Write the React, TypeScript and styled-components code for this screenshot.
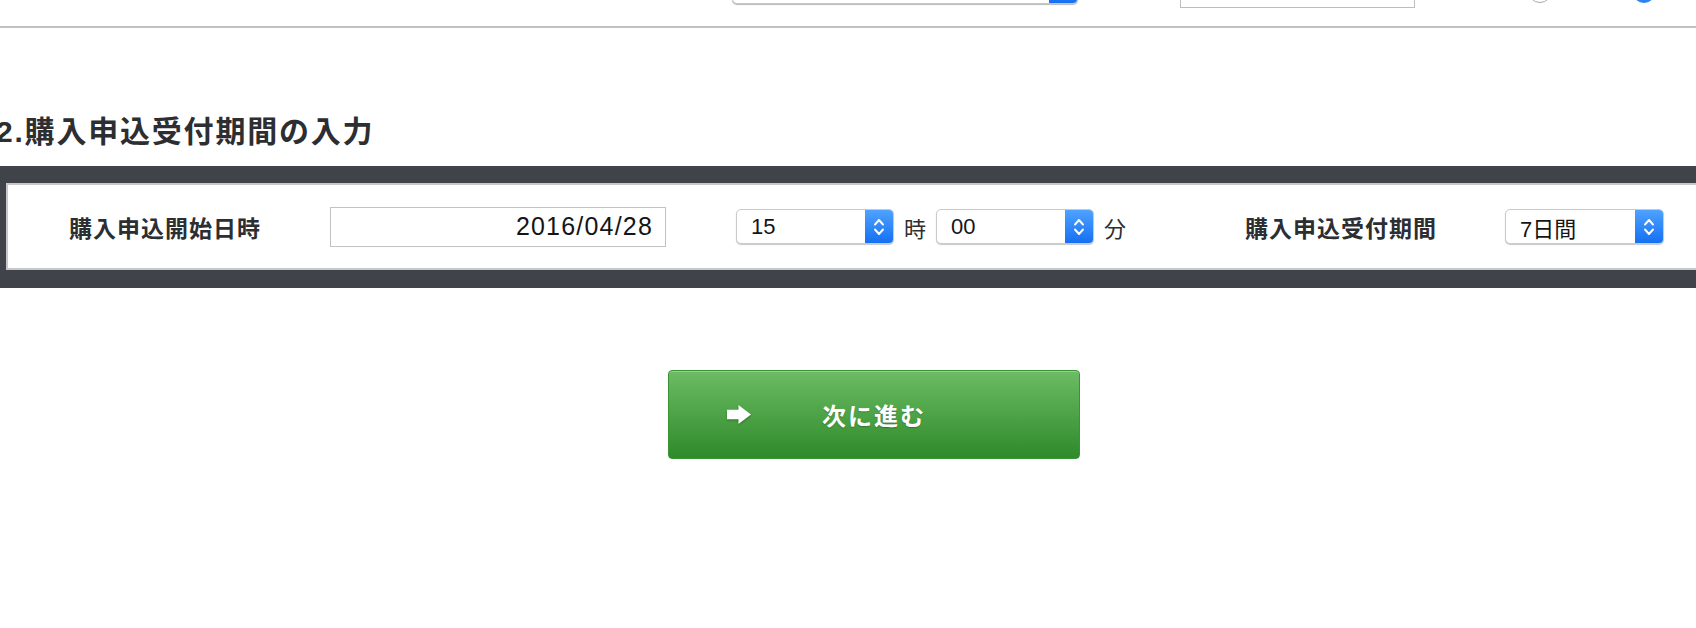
import React from "react";
import styled, { createGlobalStyle } from "styled-components";

const GlobalStyle = createGlobalStyle`
  html, body { margin: 0; padding: 0; background: #ffffff; }
  body {
    font-family: "Liberation Sans", "Noto Sans CJK JP", sans-serif;
    color: #2e3034;
    overflow: hidden;
  }
  * { box-sizing: border-box; }
`;

const Page = styled.div`
  width: 1696px;
  height: 628px;
  overflow: hidden;
`;

/* ---------- top (partially scrolled-off) row ---------- */
const TopRow = styled.div`
  height: 28px;
  display: flex;
  align-items: flex-end;
  padding-left: 732px;
  overflow: hidden;
  border-bottom: 2px solid #c2c2c2;
`;

const TopSelect = styled.div`
  width: 346px;
  height: 34px;
  margin-bottom: 22px;
  display: flex;
  justify-content: flex-end;
  border: 1px solid #c6c6c6;
  border-radius: 5px;
  overflow: hidden;
  background: #fff;
  box-shadow: 0 1px 1px rgba(0, 0, 0, 0.28);
`;

const TopStepper = styled.div`
  width: 28px;
  background: linear-gradient(#4fa2ff, #1570f2);
`;

const TopInput = styled.div<{ $gap: number }>`
  width: 235px;
  height: 40px;
  margin-left: ${(p) => p.$gap}px;
  margin-bottom: 18px;
  border: 1px solid #bdbdbd;
  background: #fff;
`;

const Radio = styled.div<{ $gap: number; $checked?: boolean }>`
  width: 24px;
  height: 24px;
  margin-left: ${(p) => p.$gap}px;
  margin-bottom: 23px;
  border-radius: 50%;
  border: 1px solid ${(p) => (p.$checked ? "#2a86f2" : "#a9a9a9")};
  background: ${(p) => (p.$checked ? "linear-gradient(#5aa8ff, #2a7ff0)" : "#fff")};
`;

/* ---------- section ---------- */
const Heading = styled.h2`
  margin: 86px 0 0 -4px;
  font-size: 30px;
  line-height: 36px;
  font-weight: 700;
  letter-spacing: 1.8px;
  color: #2c2e32;
  white-space: nowrap;
`;

const Panel = styled.section`
  margin-top: 16px;
  width: 1720px;
  background: #404349;
  padding: 17px 0 18px 6px;
`;

const PanelRow = styled.div`
  height: 87px;
  display: flex;
  align-items: center;
  padding-left: 61px;
  background: #fff;
  border: 2px solid #c6c8cb;
`;

const Label = styled.div<{ $gap?: number }>`
  margin-left: ${(p) => p.$gap ?? 0}px;
  font-size: 23px;
  font-weight: 700;
  letter-spacing: 1px;
  color: #2c2e32;
  white-space: nowrap;
`;

const DateField = styled.div<{ $gap: number }>`
  margin-left: ${(p) => p.$gap}px;
  width: 336px;
  height: 40px;
  border: 1px solid #c3c3c3;
  padding-right: 12px;
  display: flex;
  align-items: center;
  justify-content: flex-end;
  font-size: 25px;
  letter-spacing: 1.2px;
  color: #151515;
`;

const SelectBox = styled.div<{ $gap: number; $width: number }>`
  margin-left: ${(p) => p.$gap}px;
  width: ${(p) => p.$width}px;
  height: 35px;
  display: flex;
  border: 1px solid #cacaca;
  border-radius: 5px;
  overflow: hidden;
  background: #fff;
  box-shadow: 0 1px 1px rgba(0, 0, 0, 0.22);
`;

const SelectValue = styled.div`
  flex: 1;
  padding-left: 14px;
  display: flex;
  align-items: center;
  font-size: 22px;
  color: #151515;
`;

const Stepper = styled.div`
  width: 28px;
  display: flex;
  align-items: center;
  justify-content: center;
  background: linear-gradient(#4fa2ff, #1570f2);
`;

const Unit = styled.span`
  margin-left: 10px;
  font-size: 22px;
  color: #2c2e32;
`;

/* ---------- button ---------- */
const ButtonArea = styled.div`
  margin: 82px 0 0 668px;
`;

const NextButton = styled.button`
  width: 412px;
  height: 89px;
  display: flex;
  align-items: center;
  padding: 0 0 0 58px;
  border: 1px solid #3a9334;
  border-radius: 4px;
  background: linear-gradient(#6cbc63, #2e8a2a);
  box-shadow: inset 0 1px 0 #92d389;
  cursor: pointer;
  font-family: "Liberation Sans", "Noto Sans CJK JP", sans-serif;
`;

const ButtonText = styled.span`
  margin-left: 71px;
  font-size: 24px;
  font-weight: 700;
  letter-spacing: 2px;
  color: #ffffff;
  text-shadow: 0 1px 1px rgba(0, 0, 0, 0.25);
`;

const Chevrons = () => (
  <svg width="12" height="22" viewBox="0 0 12 22" fill="none">
    <path d="M2 8.5 L6 4 L10 8.5" stroke="#fff" strokeWidth="1.9" strokeLinecap="round" strokeLinejoin="round" />
    <path d="M2 13.5 L6 18 L10 13.5" stroke="#fff" strokeWidth="1.9" strokeLinecap="round" strokeLinejoin="round" />
  </svg>
);

const Arrow = () => (
  <svg width="24" height="19" viewBox="0 0 23 18" style={{ filter: "drop-shadow(0 1px 1px rgba(0,0,0,0.3))" }}>
    <path d="M0 4.5 H11 V0 L23 9 L11 18 V13.5 H0 Z" fill="#ffffff" />
  </svg>
);

const Select = ({ value, gap, width }: { value: string; gap: number; width: number }) => (
  <SelectBox $gap={gap} $width={width}>
    <SelectValue>{value}</SelectValue>
    <Stepper>
      <Chevrons />
    </Stepper>
  </SelectBox>
);

export default function App() {
  return (
    <Page>
      <GlobalStyle />
      <TopRow>
        <TopSelect>
          <TopStepper />
        </TopSelect>
        <TopInput $gap={102} />
        <Radio $gap={113} />
        <Radio $gap={80} $checked />
      </TopRow>

      <Heading>2.購入申込受付期間の入力</Heading>

      <Panel>
        <PanelRow>
          <Label>購入申込開始日時</Label>
          <DateField $gap={69}>2016/04/28</DateField>
          <Select value="15" gap={70} width={158} />
          <Unit>時</Unit>
          <Select value="00" gap={10} width={158} />
          <Unit>分</Unit>
          <Label $gap={119}>購入申込受付期間</Label>
          <Select value="7日間" gap={68} width={159} />
        </PanelRow>
      </Panel>

      <ButtonArea>
        <NextButton type="button">
          <Arrow />
          <ButtonText>次に進む</ButtonText>
        </NextButton>
      </ButtonArea>
    </Page>
  );
}
